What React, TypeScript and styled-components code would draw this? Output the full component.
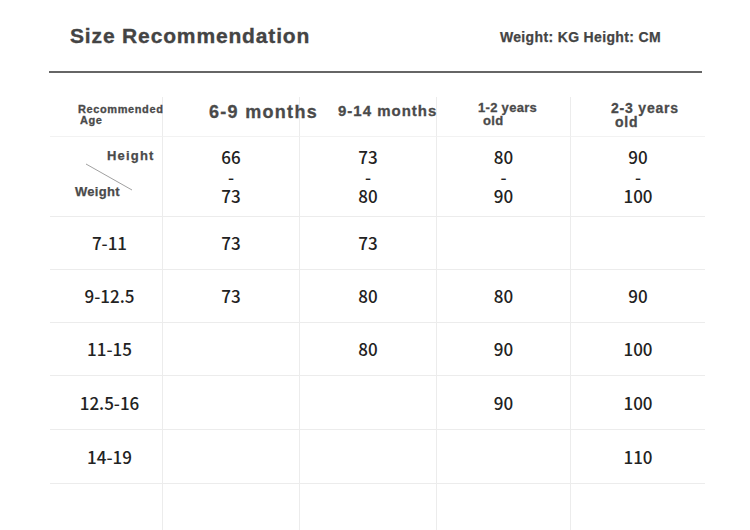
import React from "react";
import styled, { createGlobalStyle } from "styled-components";

const Global = createGlobalStyle`
  html, body { margin: 0; padding: 0; background: #ffffff; }
  body { width: 750px; height: 530px; overflow: hidden; }
  #root { width: 750px; height: 530px; overflow: hidden; }
`;

const Page = styled.div`
  width: 750px;
  height: 530px;
  background: #fff;
  font-family: "Liberation Sans", Arial, sans-serif;
`;

const HeaderBar = styled.div`
  margin: 0 48px 0 49px;
  height: 71px;
  border-bottom: 2px solid #666;
  display: flex;
  align-items: center;
  justify-content: space-between;
  padding: 0 41px 0 21px;
`;

const Title = styled.h1`
  margin: 0;
  font-size: 21px;
  font-weight: 700;
  color: #444;
  letter-spacing: 0.85px;
  -webkit-text-stroke: 0.35px #444;
`;

const Units = styled.div`
  font-size: 14px;
  font-weight: 700;
  color: #444;
  letter-spacing: 0.35px;
  -webkit-text-stroke: 0.25px #444;
  padding-top: 2px;
`;

const Table = styled.div`
  margin: 24px 0 0 50px;
  display: grid;
  grid-template-columns: 113px 137px 137px 134px 134px;
  grid-template-rows: 40px 80px 53px 53px 53px 54px 54px 60px;
`;

const Cell = styled.div<{ $last?: boolean; $head?: boolean; $first?: boolean }>`
  position: relative;
  border-right: ${(p) => (p.$last ? "none" : "1px solid #ececec")};
  border-bottom: 1px solid ${(p) => (p.$head ? "#f2f2f2" : "#ececec")};
  display: flex;
  flex-direction: column;
  justify-content: center;
  align-items: center;
  padding-left: ${(p) => (p.$first ? 7 : 0)}px;
`;

const HeadCell = styled(Cell)<{ $pl: number; $pb: number }>`
  align-items: flex-start;
  padding-left: ${(p) => p.$pl}px;
  padding-bottom: ${(p) => p.$pb}px;
`;

const HeadLabel = styled.div<{ $size: number; $ls: number; $indent?: number }>`
  font-size: ${(p) => p.$size}px;
  font-weight: 700;
  color: #4a4a4a;
  letter-spacing: ${(p) => p.$ls}px;
  -webkit-text-stroke: 0.3px #4a4a4a;
  line-height: ${(p) => Math.round(p.$size * 0.98)}px;
  white-space: nowrap;
  padding-left: ${(p) => p.$indent ?? 0}px;
`;

const Num = styled.div`
  font-family: "Noto Sans CJK SC", "Noto Sans", sans-serif;
  font-size: 17px;
  font-weight: 500;
  color: #222;
  line-height: 19.5px;
  text-align: center;
`;

const DiagCell = styled(Cell)`
  align-items: stretch;
  justify-content: space-between;
  padding: 11px 0 16px;
`;

const DiagLabel = styled.span<{ $ls: number; $pl: number }>`
  font-size: 13px;
  font-weight: 700;
  color: #4a4a4a;
  letter-spacing: ${(p) => p.$ls}px;
  -webkit-text-stroke: 0.25px #4a4a4a;
  padding-left: ${(p) => p.$pl}px;
  line-height: 16px;
`;

const Diagonal = styled.svg`
  position: absolute;
  left: 0;
  top: 0;
`;

type Row = { w: string; vals: string[] };

const rows: Row[] = [
  { w: "7-11", vals: ["73", "73", "", ""] },
  { w: "9-12.5", vals: ["73", "80", "80", "90"] },
  { w: "11-15", vals: ["", "80", "90", "100"] },
  { w: "12.5-16", vals: ["", "", "90", "100"] },
  { w: "14-19", vals: ["", "", "", "110"] },
];

const ranges = [
  ["66", "73"],
  ["73", "80"],
  ["80", "90"],
  ["90", "100"],
];

export default function App() {
  return (
    <Page>
      <Global />
      <HeaderBar>
        <Title>Size Recommendation</Title>
        <Units>Weight: KG Height: CM</Units>
      </HeaderBar>
      <Table>
        <HeadCell $head $pl={28} $pb={4}>
          <HeadLabel $size={11} $ls={0.6}>Recommended</HeadLabel>
          <HeadLabel $size={11} $ls={0.6} $indent={2}>Age</HeadLabel>
        </HeadCell>
        <HeadCell $head $pl={46} $pb={10}>
          <HeadLabel $size={18} $ls={1.3}>6-9 months</HeadLabel>
        </HeadCell>
        <HeadCell $head $pl={38} $pb={12}>
          <HeadLabel $size={15} $ls={1.0}>9-14 months</HeadLabel>
        </HeadCell>
        <HeadCell $head $pl={41} $pb={6}>
          <HeadLabel $size={13} $ls={0.3}>1-2 years</HeadLabel>
          <HeadLabel $size={13} $ls={0.3} $indent={5}>old</HeadLabel>
        </HeadCell>
        <HeadCell $head $last $pl={40} $pb={3}>
          <HeadLabel $size={14} $ls={0.8}>2-3 years</HeadLabel>
          <HeadLabel $size={14} $ls={0.8} $indent={4}>old</HeadLabel>
        </HeadCell>

        <DiagCell>
          <Diagonal width="113" height="80">
            <line x1="36" y1="27" x2="82" y2="53" stroke="#888" strokeWidth="0.8" />
          </Diagonal>
          <DiagLabel $ls={1.2} $pl={57}>Height</DiagLabel>
          <DiagLabel $ls={0.3} $pl={25}>Weight</DiagLabel>
        </DiagCell>
        {ranges.map((r, i) => (
          <Cell key={i} $last={i === 3}>
            <Num>
              {r[0]}
              <br />-<br />
              {r[1]}
            </Num>
          </Cell>
        ))}

        {rows.map((row) => (
          <React.Fragment key={row.w}>
            <Cell $first>
              <Num>{row.w}</Num>
            </Cell>
            {row.vals.map((v, i) => (
              <Cell key={i} $last={i === 3}>
                {v && <Num>{v}</Num>}
              </Cell>
            ))}
          </React.Fragment>
        ))}

        {[0, 1, 2, 3, 4].map((i) => (
          <Cell key={"e" + i} $last={i === 4} />
        ))}
      </Table>
    </Page>
  );
}
